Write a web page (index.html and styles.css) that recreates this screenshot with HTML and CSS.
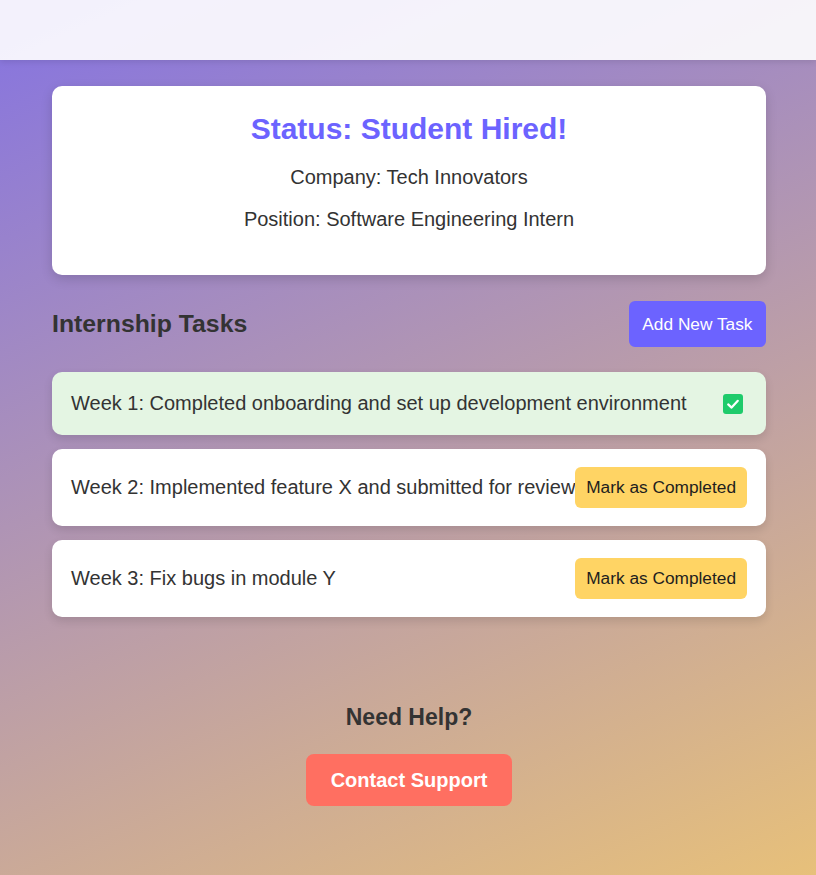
FILE: index.html
```html
<!DOCTYPE html>
<html lang="en">
<head>
<meta charset="utf-8">
<title>Internship Status</title>
<link rel="stylesheet" href="styles.css">
</head>
<body>
<header class="topbar"></header>
<main class="page">
  <section class="status-card">
    <h1 class="status-title">Status: Student Hired!</h1>
    <p class="status-line">Company: Tech Innovators</p>
    <p class="status-line">Position: Software Engineering Intern</p>
  </section>

  <div class="tasks-head">
    <h2 class="tasks-title">Internship Tasks</h2>
    <button class="btn-add">Add New Task</button>
  </div>

  <ul class="task-list">
    <li class="task task-done">
      <span class="task-text">Week 1: Completed onboarding and set up development environment</span>
      <span class="check" role="checkbox" aria-checked="true">
        <svg viewBox="0 0 20 20" width="20" height="20"><path d="M5.2 10.4 L8.6 13.6 L14.8 6.8" fill="none" stroke="#fff" stroke-width="2.2" stroke-linecap="round" stroke-linejoin="round"/></svg>
      </span>
    </li>
    <li class="task">
      <span class="task-text">Week 2: Implemented feature X and submitted for review</span>
      <button class="btn-complete">Mark as Completed</button>
    </li>
    <li class="task">
      <span class="task-text">Week 3: Fix bugs in module Y</span>
      <button class="btn-complete">Mark as Completed</button>
    </li>
  </ul>

  <section class="help">
    <h3 class="help-title">Need Help?</h3>
    <button class="btn-support">Contact Support</button>
  </section>
</main>
</body>
</html>
```

FILE: styles.css
```css
html, body {
  margin: 0;
  padding: 0;
}

body {
  min-height: 100vh;
  font-family: "Liberation Sans", Arial, sans-serif;
  color: #333;
  background: linear-gradient(156deg, #8573e1 0%, #e7c07a 100%);
  background-attachment: fixed;
}

.topbar {
  height: 60px;
  background: rgba(255, 255, 255, 0.9);
  box-shadow: 0 2px 6px rgba(0, 0, 0, 0.1);
}

.page {
  padding: 26px 50px 20px 52px;
}

.status-card {
  background: #fff;
  border-radius: 10px;
  padding: 25px;
  text-align: center;
  box-shadow: 0 4px 12px rgba(0, 0, 0, 0.15);
  margin-bottom: 26px;
}

.status-title {
  margin: 0;
  font-size: 30px;
  line-height: 35px;
  color: #6c63ff;
}

.status-line {
  margin: 20px 0;
  font-size: 20px;
  line-height: 22px;
}

.tasks-head {
  display: flex;
  justify-content: space-between;
  align-items: center;
  margin-bottom: 25px;
}

.tasks-title {
  margin: 0;
  font-size: 24.8px;
  line-height: 28px;
  color: #333;
}

.btn-add {
  border: none;
  border-radius: 6px;
  background: #6c63ff;
  color: #fff;
  font-family: inherit;
  font-size: 17.3px;
  line-height: 20px;
  padding: 13px 13.5px;
}

.task-list {
  list-style: none;
  margin: 0;
  padding: 0;
  display: flex;
  flex-direction: column;
  gap: 14px;
}

.task {
  display: flex;
  justify-content: space-between;
  align-items: center;
  background: #fff;
  border-radius: 10px;
  padding: 18px 19px 18px 19px;
  box-shadow: 0 4px 10px rgba(0, 0, 0, 0.12);
}

.task-done {
  background: #e4f5e3;
  padding-right: 20px;
}

.task-text {
  font-size: 20px;
  line-height: 27px;
  white-space: nowrap;
  min-width: 0;
}

.check {
  width: 20px;
  height: 20px;
  margin-right: 3px;
  border-radius: 3px;
  background: #1ecb6b;
  display: flex;
  flex-shrink: 0;
}

.btn-complete {
  flex-shrink: 0;
  border: none;
  border-radius: 6px;
  background: #ffd464;
  color: #1e1e1e;
  font-family: inherit;
  font-size: 17.3px;
  line-height: 21px;
  padding: 10px 11px;
}

.help {
  margin-top: 87px;
  text-align: center;
}

.help-title {
  margin: 0 0 24px;
  font-size: 23px;
  line-height: 26px;
  color: #333;
}

.btn-support {
  border: none;
  border-radius: 8px;
  background: #ff6f61;
  color: #fff;
  font-family: inherit;
  font-weight: bold;
  font-size: 20px;
  line-height: 23px;
  padding: 14.5px 24.5px;
}
```
